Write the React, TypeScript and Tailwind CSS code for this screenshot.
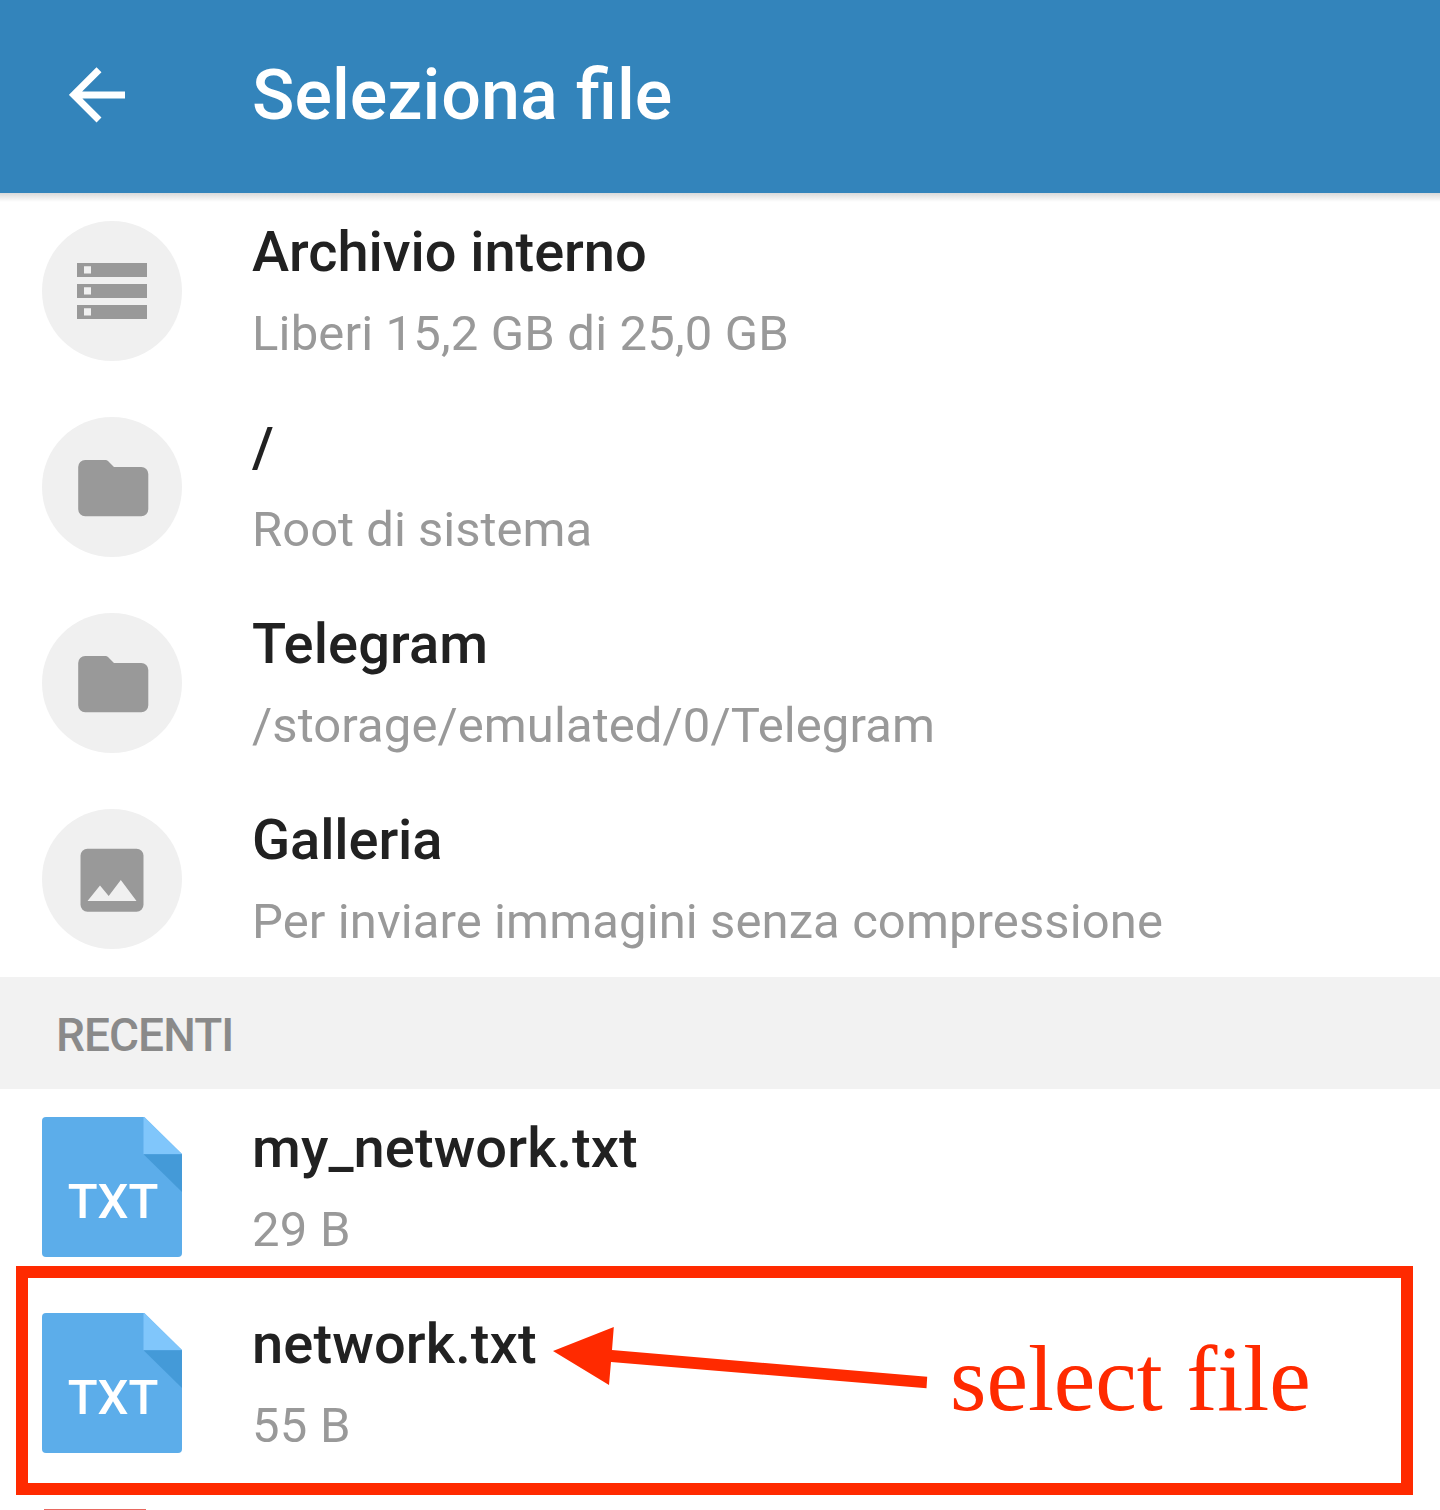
import type { ReactNode } from "react";

function StorageIcon() {
  return (
    <svg className="size-[140px]" viewBox="0 0 140 140" fill="#999999">
      <path
        fillRule="evenodd"
        d="M35 42h70v14H35zM42 45.3v7.200h7v-7.200zM35 63h70v14H35zM42 66.3v7.200h7v-7.200zM35 84h70v14H35zM42 87.3v7.200h7v-7.200z"
      />
    </svg>
  );
}

function FolderIcon() {
  return (
    <svg className="size-[140px]" viewBox="0 0 140 140" fill="#999999">
      <path d="M43 43h20.5q1.500 0 2.500 1l6 6H99.300a7 7 0 0 1 7 7V92.300a7 7 0 0 1-7 7H43.200a7 7 0 0 1-7-7V50a7 7 0 0 1 7-7z" />
    </svg>
  );
}

function GalleryIcon() {
  return (
    <svg className="size-[140px]" viewBox="0 0 140 140">
      <rect x="38.500" y="39.700" width="63" height="63" rx="7" fill="#999999" />
      <path d="M45.500 92L58 76.500L66.700 87L78.800 71L94.500 92z" fill="#f0f0f0" />
    </svg>
  );
}

function CircleIcon({ children }: { children: ReactNode }) {
  return <div className="size-[140px] shrink-0 rounded-full bg-[#f0f0f0]">{children}</div>;
}

function TxtIcon() {
  return (
    <div className="relative size-[140px] shrink-0">
      <svg className="size-[140px]" viewBox="0 0 140 140">
        <path d="M4 0H102L140 37V136a4 4 0 0 1-4 4H4a4 4 0 0 1-4-4V4a4 4 0 0 1 4-4z" fill="#5cadea" />
        <path d="M101.500 0H102.500L140 37.300H101.500z" fill="#80c6fb" />
        <path d="M101.500 37.300H140V75z" fill="#449ad8" />
      </svg>
      <span className="absolute top-[56px] left-px w-[140px] text-center text-[49px] leading-[57px] font-medium text-white">
        TXT
      </span>
    </div>
  );
}

type RowProps = {
  icon: ReactNode;
  title: string;
  detail: string;
  titleTracking?: string;
  detailTracking?: string;
};

function Row({ icon, title, detail, titleTracking = "", detailTracking = "" }: RowProps) {
  return (
    <li className="flex h-[196px] items-start gap-[70px] pt-7 pl-[42px]">
      {icon}
      <div className="flex flex-col whitespace-nowrap">
        <span className={`-mt-[2px] text-[56px] leading-[66px] font-medium text-[#212121] ${titleTracking}`}>{title}</span>
        <span className={`mt-5 text-[49px] leading-[57px] text-[#999999] ${detailTracking}`}>{detail}</span>
      </div>
    </li>
  );
}

export default function App() {
  return (
    <div className="relative h-[1510px] w-[1440px] overflow-hidden bg-white font-['Roboto',sans-serif]">
      <header className="relative flex h-[193px] items-start bg-[#3384bb] pl-[69px]">
        <svg className="mt-[67px] h-[56px] w-[56px] shrink-0" viewBox="0 0 56 56" fill="none" stroke="#ffffff" strokeWidth="7">
          <path d="M56 28H7M30 2.800L4.900 27.900L30 53" />
        </svg>
        <h1 className="mt-[54px] ml-[127px] text-[70px] leading-[82px] font-medium text-white">
          Selezi<span className="ml-px">ona</span> <span className="ml-px">file</span>
        </h1>
        <div className="absolute inset-x-0 top-full h-[9px] bg-linear-to-b from-black/15 to-transparent" />
      </header>

      <ul>
        <Row
          icon={<CircleIcon><StorageIcon /></CircleIcon>}
          title="Archivio interno"
          detail="Liberi 15,2 GB di 25,0 GB"
          titleTracking="tracking-[-0.06px]"
          detailTracking="tracking-[0.16px]"
        />
        <Row icon={<CircleIcon><FolderIcon /></CircleIcon>} title="/" detail="Root di sistema" />
        <Row
          icon={<CircleIcon><FolderIcon /></CircleIcon>}
          title="Telegram"
          detail="/storage/emulated/0/Telegram"
          titleTracking="tracking-[0.1px]"
          detailTracking="tracking-[0.08px]"
        />
        <Row
          icon={<CircleIcon><GalleryIcon /></CircleIcon>}
          title="Galleria"
          detail="Per inviare immagini senza compressione"
          titleTracking="tracking-[-0.1px]"
          detailTracking="tracking-[0.1px]"
        />
      </ul>

      <h2 className="flex h-28 items-center bg-[#f2f2f2] pt-[4px] pl-14 text-[46px] font-medium tracking-[-0.95px] text-[#8a8a8a]">
        RECENTI
      </h2>

      <ul>
        <Row icon={<TxtIcon />} title="my_network.txt" detail="29 B" titleTracking="tracking-[0.1px]" detailTracking="tracking-[0.25px]" />
        <Row icon={<TxtIcon />} title="network.txt" detail="55 B" titleTracking="tracking-[0.14px]" detailTracking="tracking-[0.25px]" />
      </ul>
      <div className="pt-7 pl-[44px]">
        <div className="h-[2px] w-[102px] bg-[#ea675f]" />
      </div>

      {/* Annotation over the list */}
      <div className="absolute top-[1266px] left-[16px] h-[229px] w-[1397px] border-[12px] border-[#ff2a00]" />
      <svg className="absolute top-[1320px] left-[550px] h-[72px] w-[384px]" viewBox="550 1320 384 72" fill="#ff2a00">
        <path d="M553 1351L613.800 1327L612 1350L927.200 1376.700L926.500 1388.300L611 1362L609 1385z" />
      </svg>
      <span className="absolute top-[1325px] left-[950px] text-[93.5px] leading-[107px] whitespace-nowrap text-[#ff2a00] font-['Liberation_Serif',serif] [font-variant-ligatures:none]">
        select file
      </span>
    </div>
  );
}
